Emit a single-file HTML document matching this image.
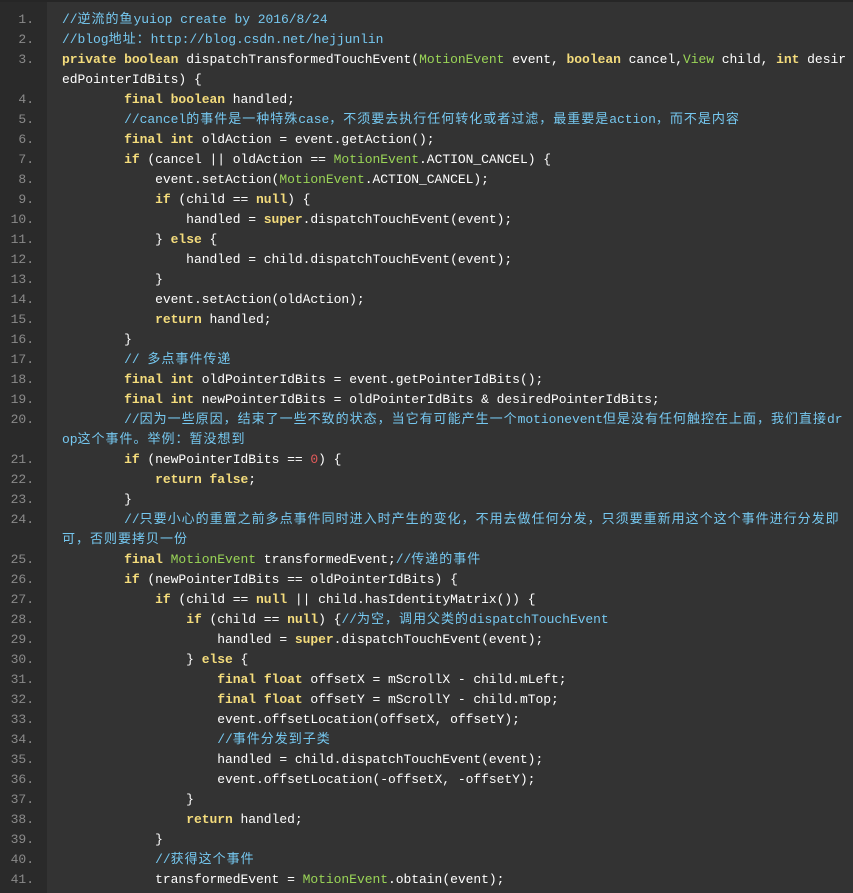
<!DOCTYPE html>
<html><head><meta charset="utf-8">
<style>
html,body{margin:0;padding:0;width:853px;height:893px;overflow:hidden;background:#333;}
body{position:relative;font-family:"Liberation Mono","Noto Sans CJK SC",monospace;font-size:13px;}
.gut{position:absolute;left:0;top:0;width:47px;height:893px;background:#2a2a2a;}
.top{position:absolute;left:0;top:0;width:853px;height:2px;background:#262626;}
.r{position:absolute;left:0;height:20px;line-height:20px;white-space:pre;color:#fff;width:853px;}
.n{position:absolute;left:0;width:34px;text-align:right;color:#8a8a8a;}
.c{position:absolute;left:62px;letter-spacing:-0.04px;}
.k{color:#f4dc7c;font-weight:bold;}
.t{color:#9ad557;}
.m{color:#76c8f0;}
.d{color:#e35b5b;}
.z{font-family:"Noto Sans CJK SC","WenQuanYi Zen Hei",sans-serif;font-size:13px;letter-spacing:1px;line-height:1;}
</style></head><body>
<div class="gut"></div><div class="top"></div>
<div class="r" style="top:10px"><span class="n">1.</span><span class="c"><span class="m">//<span class="z">逆流的鱼</span>yuiop create by 2016/8/24</span></span></div>
<div class="r" style="top:30px"><span class="n">2.</span><span class="c"><span class="m">//blog<span class="z">地址：</span>http://blog.csdn.net/hejjunlin</span></span></div>
<div class="r" style="top:50px"><span class="n">3.</span><span class="c"><span class="k">private</span> <span class="k">boolean</span> dispatchTransformedTouchEvent(<span class="t">MotionEvent</span> event, <span class="k">boolean</span> cancel,<span class="t">View</span> child, <span class="k">int</span> desir</span></div>
<div class="r" style="top:70px"><span class="c">edPointerIdBits) {</span></div>
<div class="r" style="top:90px"><span class="n">4.</span><span class="c">        <span class="k">final</span> <span class="k">boolean</span> handled;</span></div>
<div class="r" style="top:110px"><span class="n">5.</span><span class="c">        <span class="m">//cancel<span class="z">的事件是一种特殊</span>case<span class="z">，不须要去执行任何转化或者过滤，最重要是</span>action<span class="z">，而不是内容</span></span></span></div>
<div class="r" style="top:130px"><span class="n">6.</span><span class="c">        <span class="k">final</span> <span class="k">int</span> oldAction = event.getAction();</span></div>
<div class="r" style="top:150px"><span class="n">7.</span><span class="c">        <span class="k">if</span> (cancel || oldAction == <span class="t">MotionEvent</span>.ACTION_CANCEL) {</span></div>
<div class="r" style="top:170px"><span class="n">8.</span><span class="c">            event.setAction(<span class="t">MotionEvent</span>.ACTION_CANCEL);</span></div>
<div class="r" style="top:190px"><span class="n">9.</span><span class="c">            <span class="k">if</span> (child == <span class="k">null</span>) {</span></div>
<div class="r" style="top:210px"><span class="n">10.</span><span class="c">                handled = <span class="k">super</span>.dispatchTouchEvent(event);</span></div>
<div class="r" style="top:230px"><span class="n">11.</span><span class="c">            } <span class="k">else</span> {</span></div>
<div class="r" style="top:250px"><span class="n">12.</span><span class="c">                handled = child.dispatchTouchEvent(event);</span></div>
<div class="r" style="top:270px"><span class="n">13.</span><span class="c">            }</span></div>
<div class="r" style="top:290px"><span class="n">14.</span><span class="c">            event.setAction(oldAction);</span></div>
<div class="r" style="top:310px"><span class="n">15.</span><span class="c">            <span class="k">return</span> handled;</span></div>
<div class="r" style="top:330px"><span class="n">16.</span><span class="c">        }</span></div>
<div class="r" style="top:350px"><span class="n">17.</span><span class="c">        <span class="m">// <span class="z">多点事件传递</span></span></span></div>
<div class="r" style="top:370px"><span class="n">18.</span><span class="c">        <span class="k">final</span> <span class="k">int</span> oldPointerIdBits = event.getPointerIdBits();</span></div>
<div class="r" style="top:390px"><span class="n">19.</span><span class="c">        <span class="k">final</span> <span class="k">int</span> newPointerIdBits = oldPointerIdBits &amp; desiredPointerIdBits;</span></div>
<div class="r" style="top:410px"><span class="n">20.</span><span class="c">        <span class="m">//<span class="z">因为一些原因，结束了一些不致的状态，当它有可能产生一个</span>motionevent<span class="z">但是没有任何触控在上面，我们直接</span>dr</span></span></div>
<div class="r" style="top:430px"><span class="c"><span class="m">op<span class="z">这个事件。举例：暂没想到</span></span></span></div>
<div class="r" style="top:450px"><span class="n">21.</span><span class="c">        <span class="k">if</span> (newPointerIdBits == <span class="d">0</span>) {</span></div>
<div class="r" style="top:470px"><span class="n">22.</span><span class="c">            <span class="k">return</span> <span class="k">false</span>;</span></div>
<div class="r" style="top:490px"><span class="n">23.</span><span class="c">        }</span></div>
<div class="r" style="top:510px"><span class="n">24.</span><span class="c">        <span class="m">//<span class="z">只要小心的重置之前多点事件同时进入时产生的变化，不用去做任何分发，只须要重新用这个这个事件进行分发即</span></span></span></div>
<div class="r" style="top:530px"><span class="c"><span class="m"><span class="z">可，否则要拷贝一份</span></span></span></div>
<div class="r" style="top:550px"><span class="n">25.</span><span class="c">        <span class="k">final</span> <span class="t">MotionEvent</span> transformedEvent;<span class="m">//<span class="z">传递的事件</span></span></span></div>
<div class="r" style="top:570px"><span class="n">26.</span><span class="c">        <span class="k">if</span> (newPointerIdBits == oldPointerIdBits) {</span></div>
<div class="r" style="top:590px"><span class="n">27.</span><span class="c">            <span class="k">if</span> (child == <span class="k">null</span> || child.hasIdentityMatrix()) {</span></div>
<div class="r" style="top:610px"><span class="n">28.</span><span class="c">                <span class="k">if</span> (child == <span class="k">null</span>) {<span class="m">//<span class="z">为空，调用父类的</span>dispatchTouchEvent</span></span></div>
<div class="r" style="top:630px"><span class="n">29.</span><span class="c">                    handled = <span class="k">super</span>.dispatchTouchEvent(event);</span></div>
<div class="r" style="top:650px"><span class="n">30.</span><span class="c">                } <span class="k">else</span> {</span></div>
<div class="r" style="top:670px"><span class="n">31.</span><span class="c">                    <span class="k">final</span> <span class="k">float</span> offsetX = mScrollX - child.mLeft;</span></div>
<div class="r" style="top:690px"><span class="n">32.</span><span class="c">                    <span class="k">final</span> <span class="k">float</span> offsetY = mScrollY - child.mTop;</span></div>
<div class="r" style="top:710px"><span class="n">33.</span><span class="c">                    event.offsetLocation(offsetX, offsetY);</span></div>
<div class="r" style="top:730px"><span class="n">34.</span><span class="c">                    <span class="m">//<span class="z">事件分发到子类</span></span></span></div>
<div class="r" style="top:750px"><span class="n">35.</span><span class="c">                    handled = child.dispatchTouchEvent(event);</span></div>
<div class="r" style="top:770px"><span class="n">36.</span><span class="c">                    event.offsetLocation(-offsetX, -offsetY);</span></div>
<div class="r" style="top:790px"><span class="n">37.</span><span class="c">                }</span></div>
<div class="r" style="top:810px"><span class="n">38.</span><span class="c">                <span class="k">return</span> handled;</span></div>
<div class="r" style="top:830px"><span class="n">39.</span><span class="c">            }</span></div>
<div class="r" style="top:850px"><span class="n">40.</span><span class="c">            <span class="m">//<span class="z">获得这个事件</span></span></span></div>
<div class="r" style="top:870px"><span class="n">41.</span><span class="c">            transformedEvent = <span class="t">MotionEvent</span>.obtain(event);</span></div>
</body></html>
